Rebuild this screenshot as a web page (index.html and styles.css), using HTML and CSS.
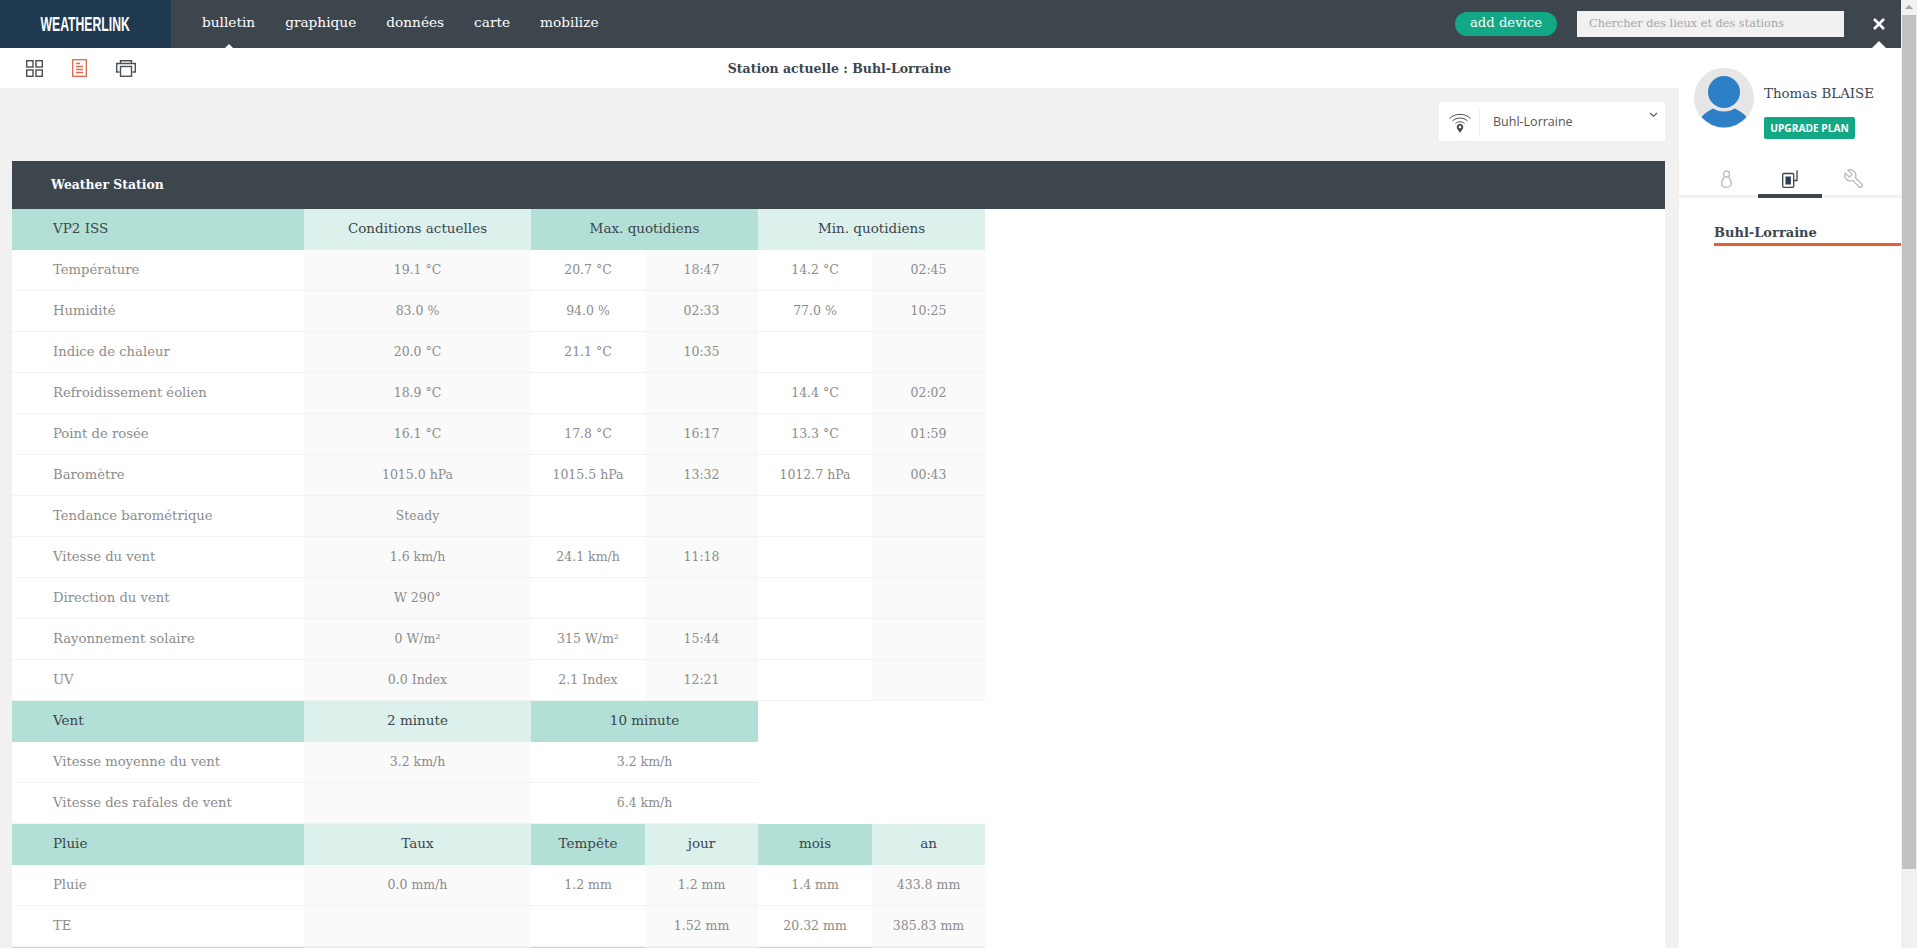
FILE: index.html
```html
<!DOCTYPE html>
<html lang="fr">
<head>
<meta charset="utf-8">
<title>WeatherLink</title>
<link rel="stylesheet" href="styles.css">
</head>
<body>
<div class="app">
  <div class="main">
    <header class="topbar">
      <div class="logo"><span>WEATHERLINK</span></div>
      <nav class="nav">
        <a class="nav-item active">bulletin</a>
        <a class="nav-item">graphique</a>
        <a class="nav-item">données</a>
        <a class="nav-item">carte</a>
        <a class="nav-item">mobilize</a>
      </nav>
      <a class="add-device">add device</a>
      <div class="search">Chercher des lieux et des stations</div>
      <div class="close">
        <svg width="14" height="14" viewBox="0 0 14 14"><path d="M2 2l10 10M12 2L2 12" stroke="#fff" stroke-width="2.6" fill="none"/></svg>
      </div>
    </header>
    <div class="body-row">
      <div class="left">
        <div class="subbar">
          <div class="tools">
            <svg width="17" height="17" viewBox="0 0 17 17" fill="none" stroke="#4a4f55" stroke-width="1.4"><rect x=".7" y=".7" width="6.3" height="6.3"/><rect x="10" y=".7" width="6.3" height="6.3"/><rect x=".7" y="10" width="6.3" height="6.3"/><rect x="10" y="10" width="6.3" height="6.3"/></svg>
            <svg width="15" height="18" viewBox="0 0 15 18" fill="none" stroke="#e2664a" stroke-width="1.3"><rect x=".7" y=".7" width="13.600" height="16.600"/><path d="M4 4.500h4M4 7.500h7M4 10.500h7M4 13.500h7"/></svg>
            <svg width="20" height="17" viewBox="0 0 20 17" fill="none" stroke="#4a4f55" stroke-width="1.4"><path d="M4.500 3.500V.7h11v2.800M3.500 12H.7V3.500h18.600V12h-2.800"/><rect x="4.500" y="6.500" width="11" height="9.800"/></svg>
          </div>
          <div class="station-title">Station actuelle : Buhl-Lorraine</div>
        </div>
        <main class="content">
          <div class="selector-row">
            <div class="selector">
              <svg class="wifi" width="24" height="24" viewBox="0 0 24 24" fill="none" stroke="#4a4f55" stroke-width="1"><path d="M1.500 8.500C7 3 17 3 22.500 8.500M4.500 11C8.500 7 15.500 7 19.500 11M7.500 13.500C10 11.200 14 11.200 16.500 13.500"/><path d="M12 23l-3-4.500a3.300 3.300 0 1 1 6 0z" fill="#4a4f55" stroke="none"/><circle cx="12" cy="17" r="1.200" fill="#fff" stroke="none"/></svg>
              <span class="selector-name">Buhl-Lorraine</span>
              <svg class="chev" width="9" height="6" viewBox="0 0 9 6" fill="none" stroke="#555" stroke-width="1.100"><path d="M1 1l3.500 3.200L8 1"/></svg>
            </div>
          </div>
          <section class="panel">
            <h2 class="panel-title">Weather Station</h2>
            <div class="grid">
              <div class="c first h1">VP2 ISS</div><div class="c h2">Conditions actuelles</div><div class="c s2 h1">Max. quotidiens</div><div class="c s2 h2">Min. quotidiens</div>

              <div class="c first">Température</div><div class="c alt">19.1 °C</div><div class="c">20.7 °C</div><div class="c alt">18:47</div><div class="c">14.2 °C</div><div class="c alt">02:45</div>
              <div class="c first">Humidité</div><div class="c alt">83.0 %</div><div class="c">94.0 %</div><div class="c alt">02:33</div><div class="c">77.0 %</div><div class="c alt">10:25</div>
              <div class="c first">Indice de chaleur</div><div class="c alt">20.0 °C</div><div class="c">21.1 °C</div><div class="c alt">10:35</div><div class="c"></div><div class="c alt"></div>
              <div class="c first">Refroidissement éolien</div><div class="c alt">18.9 °C</div><div class="c"></div><div class="c alt"></div><div class="c">14.4 °C</div><div class="c alt">02:02</div>
              <div class="c first">Point de rosée</div><div class="c alt">16.1 °C</div><div class="c">17.8 °C</div><div class="c alt">16:17</div><div class="c">13.3 °C</div><div class="c alt">01:59</div>
              <div class="c first">Baromètre</div><div class="c alt">1015.0 hPa</div><div class="c">1015.5 hPa</div><div class="c alt">13:32</div><div class="c">1012.7 hPa</div><div class="c alt">00:43</div>
              <div class="c first">Tendance barométrique</div><div class="c alt">Steady</div><div class="c"></div><div class="c alt"></div><div class="c"></div><div class="c alt"></div>
              <div class="c first">Vitesse du vent</div><div class="c alt">1.6 km/h</div><div class="c">24.1 km/h</div><div class="c alt">11:18</div><div class="c"></div><div class="c alt"></div>
              <div class="c first">Direction du vent</div><div class="c alt">W 290°</div><div class="c"></div><div class="c alt"></div><div class="c"></div><div class="c alt"></div>
              <div class="c first">Rayonnement solaire</div><div class="c alt">0 W/m²</div><div class="c">315 W/m²</div><div class="c alt">15:44</div><div class="c"></div><div class="c alt"></div>
              <div class="c first">UV</div><div class="c alt">0.0 Index</div><div class="c">2.1 Index</div><div class="c alt">12:21</div><div class="c"></div><div class="c alt"></div>

              <div class="c first h1">Vent</div><div class="c h2">2 minute</div><div class="c s2 h1">10 minute</div><div class="s2"></div>
              <div class="c first">Vitesse moyenne du vent</div><div class="c alt">3.2 km/h</div><div class="c s2">3.2 km/h</div><div class="s2"></div>
              <div class="c first">Vitesse des rafales de vent</div><div class="c alt"></div><div class="c s2">6.4 km/h</div><div class="s2"></div>

              <div class="c first h1">Pluie</div><div class="c h2">Taux</div><div class="c h1">Tempête</div><div class="c h2">jour</div><div class="c h1">mois</div><div class="c h2">an</div>
              <div class="c first">Pluie</div><div class="c alt">0.0 mm/h</div><div class="c">1.2 mm</div><div class="c alt">1.2 mm</div><div class="c">1.4 mm</div><div class="c alt">433.8 mm</div>
              <div class="c first">TE</div><div class="c alt"></div><div class="c"></div><div class="c alt">1.52 mm</div><div class="c">20.32 mm</div><div class="c alt">385.83 mm</div>
              <div class="c first h1"></div><div class="c h2"></div><div class="c h1"></div><div class="c h2"></div><div class="c h1"></div><div class="c h2"></div>
            </div>
          </section>
        </main>
      </div>
      <aside class="side">
        <div class="profile">
          <svg class="avatar" width="60" height="60" viewBox="0 0 60 60"><circle cx="30" cy="30" r="30" fill="#e6e6e6"/><circle cx="30" cy="24" r="16" fill="#2e80c6"/><path d="M7.500 49C11 44.500 16 42 19.500 40.500C24 44.500 36 44.500 40.500 40.500C44 42 49 44.500 52.500 49A29.500 29.500 0 0 1 7.500 49Z" fill="#2e80c6"/></svg>
          <div class="profile-text">
            <div class="user">Thomas BLAISE</div>
            <a class="upgrade">UPGRADE PLAN</a>
          </div>
        </div>
        <div class="tabs">
          <div class="tab">
            <svg width="11" height="18" viewBox="0 0 11 18" fill="none" stroke="#bbb" stroke-width="1.300"><circle cx="5.500" cy="4" r="3"/><path d="M3.500 6.500C1.500 9 .7 11 .7 13.500.7 16 3 17.300 5.500 17.300S10.300 16 10.300 13.500C10.300 11 9.500 9 7.500 6.500"/></svg>
          </div>
          <div class="tab on">
            <svg width="16" height="18" viewBox="0 0 16 18" fill="none" stroke="#3d454d" stroke-width="1.300"><rect x=".7" y="3.500" width="11" height="13.800" rx="1"/><rect x="3.500" y="6.500" width="5.400" height="8" fill="#2d3e55" stroke="none"/><path d="M15 .3V10.500H12"/></svg>
          </div>
          <div class="tab">
            <svg width="22" height="22" viewBox="0 0 24 24" fill="none" stroke="#bbb" stroke-width="1.500"><path transform="matrix(-1 0 0 1 24 0)" d="M14.700 6.300a1 1 0 0 0 0 1.400l1.600 1.600a1 1 0 0 0 1.400 0l3.770-3.770a6 6 0 0 1-7.940 7.940l-6.910 6.910a2.120 2.120 0 0 1-3-3l6.910-6.910a6 6 0 0 1 7.940-7.940l-3.760 3.760z"/></svg>
          </div>
        </div>
        <div class="stations"><div class="station-link">Buhl-Lorraine</div></div>
      </aside>
    </div>
  </div>
  <div class="scrollbar">
    <div class="arrow"></div>
    <div class="thumb"></div>
  </div>
</div>
</body>
</html>
```
FILE: styles.css
```css
* { box-sizing: border-box; }
html, body { margin: 0; height: 100%; overflow: hidden; }
body { font-family: "DejaVu Serif", "Liberation Serif", serif; background: #f1f1f1; }
.app { height: 948px; display: flex; }
.main { width: 1901px; flex: none; display: flex; flex-direction: column; }

.topbar { height: 48px; flex: none; background: #3d454d; display: flex; align-items: center; color: #fff; }
.logo { width: 171px; height: 48px; flex: none; background: #1f3a50; display: flex; align-items: center; justify-content: center; font-family: "Liberation Sans", sans-serif; font-size: 20px; font-weight: 700; overflow: hidden; }
.logo span { display: inline-block; transform: scaleX(.61); }
.nav { display: flex; flex: 1; padding-left: 31px; gap: 30px; height: 48px; align-items: center; }
.nav-item { position: relative; font-size: 13.700px; color: #fff; line-height: 48px; height: 48px; margin-top: -4px; top: 0; }
.nav-item.active::after { content: ""; position: absolute; left: 50%; bottom: -4px; margin-left: -6px; border: 6px solid transparent; border-top: 0; border-bottom-color: #fff; }
.add-device { width: 102px; height: 24px; background: #12a886; border-radius: 12px; font-size: 13.200px; text-align: center; line-height: 22px; margin-right: 20px; flex: none; }
.search { width: 267px; height: 26px; flex: none; background: #f1f1f1; color: #a5a5a5; font-size: 11.300px; line-height: 26px; padding-left: 12px; }
.close { width: 57px; height: 48px; flex: none; position: relative; display: flex; align-items: center; justify-content: flex-start; padding-left: 28px; }
.close::after { content: ""; position: absolute; left: 28px; bottom: 0; border: 7px solid transparent; border-top: 0; border-bottom-color: #fff; }

.body-row { flex: 1; display: flex; min-height: 0; }
.left { flex: none; width: 1679px; display: flex; flex-direction: column; }
.subbar { height: 40px; flex: none; background: #fff; position: relative; display: flex; align-items: center; justify-content: center; }
.tools { position: absolute; left: 26px; top: 0; height: 40px; display: flex; align-items: center; gap: 29px; }
.station-title { font-size: 12.500px; font-weight: 700; color: #3d454d; }
.content { flex: 1; padding: 14px 14px 0 12px; overflow: hidden; }
.selector-row { display: flex; justify-content: flex-end; height: 59px; }
.selector { width: 226px; height: 39px; background: #fff; display: flex; align-items: center; position: relative; padding-left: 9px; }
.wifi { margin-right: 7px; }
.selector-name { font-family: "Open Sans", sans-serif; font-size: 12.500px; color: #555; border-left: 1px solid #eee; padding-left: 13px; line-height: 26px; }
.chev { position: absolute; right: 7px; top: 10px; }
.panel { background: #fff; }
.panel-title { margin: 0; height: 48px; background: #3d454d; color: #fff; font-size: 12.400px; font-weight: 700; line-height: 48px; padding-left: 39px; }
.grid { display: grid; width: 973px; grid-template-columns: 292px 227px 114px 113px 114px 113px; grid-auto-rows: 41px; }
.c { font-size: 12.500px; color: #8c8c8c; text-align: center; line-height: 40px; border-bottom: 1px solid #f3f3f3; white-space: nowrap; }
.first { text-align: left; padding-left: 41px; font-size: 13.200px; }
.alt { background: #fafafa; }
.s2 { grid-column: span 2; }
.h1, .h2 { color: #3d454d; border-bottom: 1px solid transparent; font-size: 13.500px; line-height: 39px; }
.h1 { background: #b3e0d6; }
.h2 { background: #dcf1ec; }

.side { flex: none; width: 222px; background: #fff; display: flex; flex-direction: column; }
.profile { display: flex; height: 100px; flex: none; padding: 20px 0 0 15px; gap: 10px; }
.avatar { flex: none; }
.user { font-size: 13.400px; color: #3d454d; margin-top: 17px; line-height: 18px; }
.upgrade { display: block; width: 91px; height: 22px; margin-top: 14px; background: #12a886; color: #fff; border-radius: 2px; font-family: "Open Sans", sans-serif; font-weight: 700; font-size: 10.200px; line-height: 22px; text-align: center; }
.tabs { display: flex; height: 50px; flex: none; padding-left: 15px; border-bottom: 3px solid #f1f1f1; }
.tab { width: 64px; height: 50px; flex: none; border-bottom: 4px solid transparent; display: flex; align-items: center; justify-content: center; padding: 20px 0 4px; }
.tab.on { border-bottom-color: #3d454d; }
.stations { padding: 26px 0 0 35px; }
.station-link { font-size: 13px; font-weight: 700; color: #3d454d; height: 22px; border-bottom: 3px solid #e4602f; line-height: 17px; }

.scrollbar { flex: 1; background: #f1f1f1; padding: 0 1px; }
.arrow { height: 15px; position: relative; }
.arrow::after { content: ""; position: absolute; left: 3px; top: 5px; border: 4px solid transparent; border-top: 0; border-bottom-color: #a3a3a3; }
.thumb { height: 854px; background: #c1c1c1; }
```
